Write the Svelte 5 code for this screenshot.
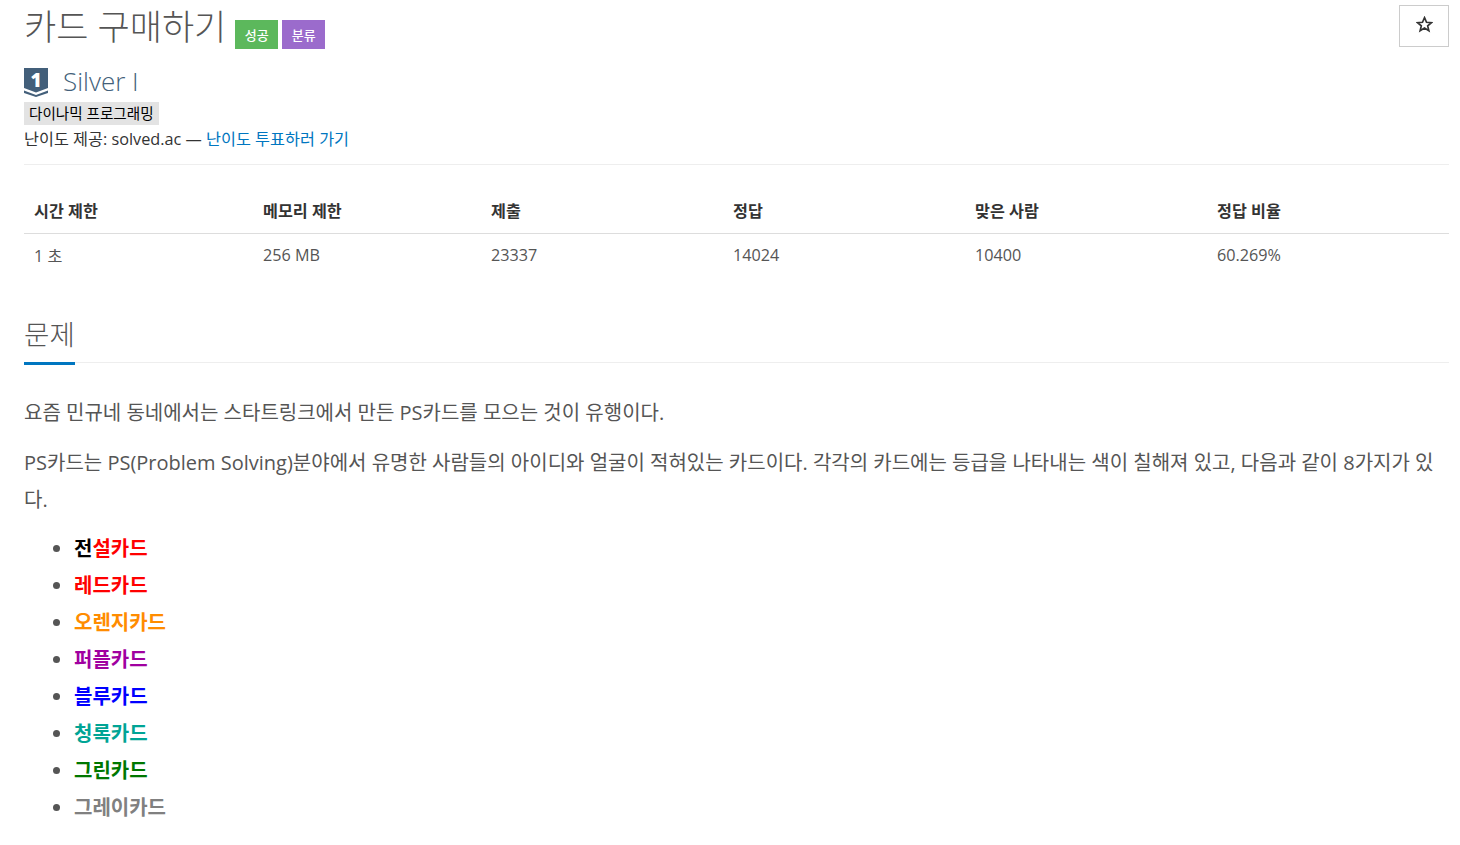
<script>
    const stats = [
        { label: "시간 제한", value: "1 초" },
        { label: "메모리 제한", value: "256 MB" },
        { label: "제출", value: "23337" },
        { label: "정답", value: "14024" },
        { label: "맞은 사람", value: "10400" },
        { label: "정답 비율", value: "60.269%" }
    ];

    const cards = [
        { name: "레드카드", color: "#ff0000" },
        { name: "오렌지카드", color: "#ff8c00" },
        { name: "퍼플카드", color: "#a000a0" },
        { name: "블루카드", color: "#0000ff" },
        { name: "청록카드", color: "#00a495" },
        { name: "그린카드", color: "#007700" },
        { name: "그레이카드", color: "#808080" }
    ];
</script>

<div class="page">
    <div class="page-header">
        <div class="title-row">
            <h1>카드 구매하기</h1>
            <span class="label green">성공</span>
            <span class="label purple">분류</span>
        </div>
        <button class="star" aria-label="즐겨찾기">
            <svg width="17" height="17" viewBox="0 0 16 16">
                <path d="M8 1.6l1.9 4.3 4.6.4-3.5 3 1.1 4.6L8 11.4l-4.1 2.5L5 9.3l-3.5-3 4.6-.4z" fill="none" stroke="#333" stroke-width="1.6" stroke-linejoin="miter"/>
            </svg>
        </button>
    </div>

    <div class="tier">
        <svg class="tier-icon" width="24" height="29" viewBox="0 0 24 29">
            <path d="M0 0h24v20l-12 4.5L0 20z" fill="#435f7a"/>
            <path d="M0 22.5l12 4.5 12-4.5V25l-12 4L0 25z" fill="#435f7a"/>
            <text x="12" y="19" text-anchor="middle" class="tier-num">1</text>
        </svg>
        <span class="tier-name">Silver I</span>
    </div>
    <div class="tag-row"><span class="tag">다이나믹 프로그래밍</span></div>
    <div class="credit">난이도 제공: solved.ac — <a href="#vote">난이도 투표하러 가기</a></div>
    <div class="rule"></div>

    <table>
        <thead>
            <tr>
                {#each stats as s}
                    <th>{s.label}</th>
                {/each}
            </tr>
        </thead>
        <tbody>
            <tr>
                {#each stats as s}
                    <td>{s.value}</td>
                {/each}
            </tr>
        </tbody>
    </table>

    <div class="headline">
        <h2>문제</h2>
    </div>

    <div class="description">
        <p>요즘 민규네 동네에서는 스타트링크에서 만든 PS카드를 모으는 것이 유행이다.</p>
        <p>PS카드는 PS(Problem Solving)분야에서 유명한 사람들의 아이디와 얼굴이 적혀있는 카드이다. 각각의 카드에는 등급을 나타내는 색이 칠해져 있고, 다음과 같이 8가지가 있다.</p>
        <ul>
            <li><strong><span class="black">전</span><span class="red">설카드</span></strong></li>
            {#each cards as card}
                <li><strong style:color={card.color}>{card.name}</strong></li>
            {/each}
        </ul>
    </div>
</div>

<style>
    :global(body) {
        margin: 0;
        background: #fff;
        font-family: "Open Sans", "Noto Sans CJK KR", sans-serif;
        color: #333;
    }
    .page {
        padding: 0 11px 0 24px;
        height: 845px;
        box-sizing: border-box;
        overflow: hidden;
    }
    .page-header {
        display: flex;
        justify-content: space-between;
        align-items: flex-start;
        height: 60px;
    }
    .title-row {
        display: flex;
        align-items: flex-start;
    }
    h1 {
        margin: 0;
        font-size: 35px;
        line-height: 54px;
        font-weight: 300;
        color: #555;
    }
    .label {
        margin-top: 20px;
        width: 43px;
        height: 29px;
        display: flex;
        align-items: center;
        justify-content: center;
        color: #fff;
        font-size: 13px;
        font-weight: 500;
    }
    .green {
        background: #5cb85c;
        margin-left: 9px;
    }
    .purple {
        background: #9b6bcc;
        margin-left: 4px;
    }
    .star {
        width: 50px;
        height: 42px;
        margin-top: 5px;
        background: #fff;
        border: 1px solid #ccc;
        padding: 0 0 4px;
        display: flex;
        align-items: center;
        justify-content: center;
    }
    .tier {
        display: flex;
        align-items: center;
        height: 30px;
        margin-top: 6px;
    }
    .tier-icon {
        margin-top: 3px;
    }
    .tier-num {
        font-family: "Open Sans", sans-serif;
        font-size: 19px;
        font-weight: 800;
        fill: #fff;
    }
    .tier-name {
        margin-left: 15px;
        font-size: 26px;
        font-weight: 300;
        line-height: 30px;
        color: #435f7a;
    }
    .tag-row {
        margin-top: 6px;
        height: 23px;
    }
    .tag {
        display: inline-block;
        background: #e3e3e3;
        color: #000;
        font-size: 14.6px;
        line-height: 23px;
        padding: 0 5px;
    }
    .credit {
        font-size: 16.25px;
        line-height: 28px;
        color: #333;
    }
    .credit a {
        color: #0076c0;
        text-decoration: none;
    }
    .rule {
        border-top: 1px solid #eee;
        margin-top: 11px;
    }
    table {
        width: 100%;
        border-collapse: collapse;
        table-layout: fixed;
        margin-top: 22px;
        font-size: 16.2px;
    }
    th, td {
        text-align: left;
        padding: 0 11px;
    }
    th:first-child, td:first-child {
        padding-left: 10px;
    }
    th {
        height: 46px;
        font-weight: 700;
        color: #333;
        border-bottom: 1px solid #ddd;
    }
    td {
        height: 41px;
        color: #555;
    }
    th:nth-child(1) { width: 207px; }
    th:nth-child(2) { width: 206px; }
    th:nth-child(3) { width: 220px; }
    th:nth-child(4) { width: 220px; }
    th:nth-child(5) { width: 220px; }
    .headline {
        margin-top: 42px;
        border-bottom: 1px solid #eee;
        height: 45px;
    }
    h2 {
        display: inline-block;
        margin: 0;
        height: 45px;
        font-size: 27.6px;
        line-height: 34px;
        font-weight: 300;
        color: #555;
        border-bottom: 3px solid #0076c0;
        box-sizing: content-box;
    }
    .description {
        margin-top: 31px;
        font-size: 20px;
        line-height: 37px;
        color: #555;
    }
    p {
        margin: 0 0 13px;
    }
    ul {
        margin: -1px 0 0;
        padding: 0 0 0 50px;
    }
    li {
        height: 37px;
    }
    strong {
        font-weight: 700;
    }
    .black { color: #000; }
    .red { color: #ff0000; }
</style>
